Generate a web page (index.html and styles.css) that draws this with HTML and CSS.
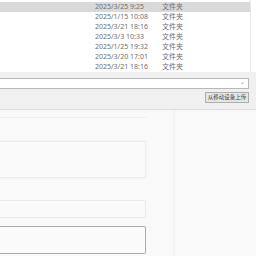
FILE: index.html
```html
<!DOCTYPE html>
<html lang="zh-CN">
<head>
    <meta charset="UTF-8">
    <title>上传文件</title>
    <link rel="stylesheet" href="styles.css">
</head>
<body>
    <div class="files">
        <div class="file-list">
            <div class="row selected"><span class="date">2025/3/25 9:25</span><span class="type">文件夹</span></div>
            <div class="row"><span class="date">2025/1/15 10:08</span><span class="type">文件夹</span></div>
            <div class="row"><span class="date">2025/3/21 18:16</span><span class="type">文件夹</span></div>
            <div class="row"><span class="date">2025/3/3 10:33</span><span class="type">文件夹</span></div>
            <div class="row"><span class="date">2025/1/25 19:32</span><span class="type">文件夹</span></div>
            <div class="row"><span class="date">2025/3/20 17:01</span><span class="type">文件夹</span></div>
            <div class="row"><span class="date">2025/3/21 18:16</span><span class="type">文件夹</span></div>
        </div>
        <div class="scroll"></div>
    </div>

    <div class="toolbar">
        <div class="select"><span class="arrow">&#8964;</span></div>
        <div class="actions">
            <button class="upload-btn">从移动设备上传</button>
        </div>
    </div>

    <div class="lower">
        <div class="form-col">
            <div class="field line"></div>
            <div class="field area"></div>
            <div class="field small"></div>
            <div class="field active"></div>
        </div>
        <div class="divider"></div>
        <div class="side"></div>
    </div>
</body>
</html>
```

FILE: styles.css
```css
body {
    margin: 0;
    width: 256px;
    height: 256px;
    overflow: hidden;
    font-family: "Noto Sans", "Noto Sans CJK SC", sans-serif;
    font-size: 7px;
    color: #707070;
    background-color: #f9f9f9;
}

.files {
    display: flex;
    height: 72px;
    background-color: #fff;
}

.file-list {
    width: 250px;
    padding-top: 2px;
    border-right: 1px solid #e8e8e8;
}

.row {
    display: flex;
    height: 10px;
    line-height: 10px;
    padding-left: 95px;
}

.row.selected {
    background-color: #d9d9d9;
}

.date {
    width: 67px;
}

.scroll {
    flex: 1;
    background-color: #fff;
}

.toolbar {
    background-color: #f0f0f0;
    padding: 6px 7px 6px 0;
    border-bottom: 1px solid #dcdcdc;
    height: 25px;
}

.select {
    height: 9px;
    background-color: #fff;
    border: 1px solid #b8b8b8;
    border-left: none;
    display: flex;
    justify-content: flex-end;
    align-items: center;
    padding-right: 3px;
}

.arrow {
    font-size: 6px;
    line-height: 6px;
    color: #888;
    margin-top: -3px;
}

.actions {
    display: flex;
    justify-content: flex-end;
    margin-top: 3px;
}

.upload-btn {
    width: 44px;
    height: 11px;
    padding: 0;
    font-family: "Noto Sans CJK SC", sans-serif;
    font-size: 5.5px;
    line-height: 9px;
    color: #444;
    background-color: #e6e6e6;
    border: 1px solid #adadad;
    border-radius: 0;
}

.lower {
    display: flex;
    height: 146px;
}

.form-col {
    width: 146px;
    display: flex;
    flex-direction: column;
}

.field {
    background-color: #fafafa;
}

.line {
    margin-top: 6px;
    height: 1px;
    border-bottom: 1px solid #eeeeee;
}

.area {
    margin-top: 23px;
    height: 35px;
    border: 1px solid #ececec;
    border-left: none;
    box-shadow: 0 0 3px #efefef;
}

.small {
    margin-top: 22px;
    height: 16px;
    border: 1px solid #ebebeb;
    border-left: none;
}

.active {
    margin-top: 8px;
    height: 26px;
    border: 1px solid #a9a9a9;
    border-left: none;
    border-radius: 0 2px 2px 0;
}

.divider {
    width: 2px;
    margin-left: 27px;
    background-color: #f2f2f2;
}

.side {
    flex: 1;
    background-color: #f9f9f9;
}
```
